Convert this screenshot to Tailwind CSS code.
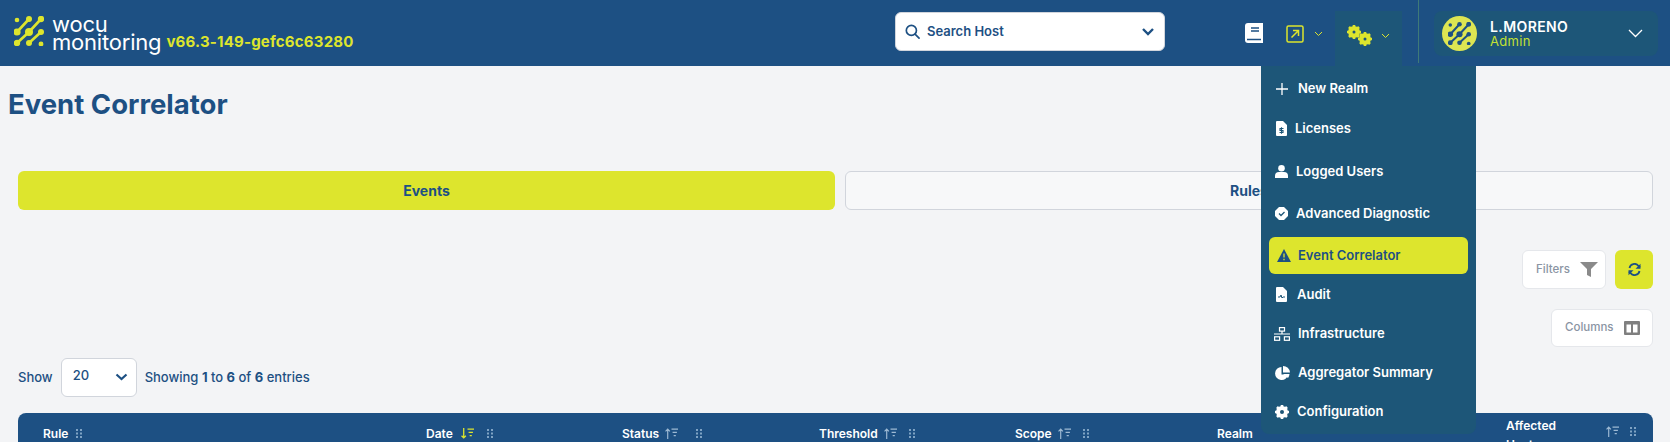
<!DOCTYPE html>
<html lang="en">
<head>
  <meta charset="UTF-8" />
  <title>Event Correlator</title>
  <script src="https://cdn.jsdelivr.net/npm/@tailwindcss/browser@4"></script>
</head>
<body class="relative h-[442px] overflow-hidden bg-[#f3f4f6] font-['Inter',sans-serif] text-[#1d5083]">
  <!-- Header -->
  <header class="flex h-[66px] items-center bg-[#1d5083]">
    <div class="flex w-[895px] items-center pl-[14px]">
      <svg class="-mt-[4px] h-[30px] w-[30px] shrink-0" viewBox="6 6 30 30" fill="#dde52d" stroke="#dde52d">
        <g stroke-width="2.600" stroke-linecap="round" fill="none"><path d="M21 9L9 22"/><path d="M33 9L21 22L9 33"/><path d="M33 22L21 33"/></g>
        <g stroke="none"><circle cx="9" cy="10" r="2.300"/><circle cx="21" cy="9" r="3"/><circle cx="33" cy="9" r="3.200"/><circle cx="9" cy="22" r="3.600"/><circle cx="21" cy="22" r="4"/><circle cx="33" cy="22" r="3"/><circle cx="9" cy="33" r="3.200"/><circle cx="21" cy="33" r="3"/><circle cx="33" cy="34" r="2.400"/></g>
      </svg>
      <div class="ml-[8px] text-[22px] leading-[18px] tracking-[-0.2px] text-white">wocu<br>monitoring</div>
      <span class="ml-[5px] mt-[18px] text-[15px] font-bold tracking-[0.2px] text-[#dde52d]">v66.3-149-gefc6c63280</span>
    </div>
    <div class="-mt-[3px] flex h-[39px] w-[270px] items-center justify-between rounded-md border border-gray-300 bg-white px-[9px]">
      <div class="flex items-center gap-[7px]">
        <svg class="h-[15px] w-[15px]" viewBox="0 0 16 16" fill="none" stroke="#1d5083" stroke-width="1.800"><circle cx="6.800" cy="6.800" r="5.400"/><path d="M11 11l4 4" stroke-linecap="round"/></svg>
        <span class="text-[13px] font-semibold">Search Host</span>
      </div>
      <svg class="h-[10px] w-[14px]" viewBox="0 0 14 10" fill="none" stroke="#1d5083" stroke-width="2.400"><path d="M2 2l5 5 5-5"/></svg>
    </div>
    <!-- book -->
    <svg class="ml-[80px] h-[20px] w-[18px]" viewBox="0 0 18 20"><path fill="#fff" d="M3 0h15v20H3a3 3 0 0 1-3-3V3a3 3 0 0 1 3-3z"/><path stroke="#1d5083" stroke-width="1.400" d="M6 5h8M6 8h8M2 16.500h14"/></svg>
    <!-- external link -->
    <svg class="ml-[23px] mt-[2px] h-[18px] w-[18px]" viewBox="0 0 18 18" fill="none" stroke="#dde52d" stroke-width="1.500"><rect x="1" y="1" width="16" height="16" rx="1.500"/><path d="M5.500 12.500L12.500 5.500M7 5.500h5.500v5.500"/></svg>
    <svg class="ml-[10px] mt-[2px] h-[6px] w-[9px]" viewBox="0 0 9 6" fill="none" stroke="#dde52d" stroke-width="1"><path d="M1 1l3.500 3.500L8 1"/></svg>
    <!-- gears -->
    <div class="ml-[12px] mt-[14px] flex h-[59px] w-[67px] items-start bg-[#1d5678] pl-[11px] pt-[14px]">
      <svg class="h-[21px] w-[26px]" viewBox="0 0 26 21" fill="#dde52d">
        <circle cx="8" cy="7" r="4.500" fill="none" stroke="#dde52d" stroke-width="3"/><path stroke="#dde52d" stroke-width="2.600" d="M8 0v14M1 7h14M3 2l10 10M13 2L3 12"/><circle cx="8" cy="7" r="1.500" fill="#1d5678"/>
        <circle cx="19" cy="14" r="4.500" fill="none" stroke="#dde52d" stroke-width="3"/><path stroke="#dde52d" stroke-width="2.600" d="M19 7v14M12 14h14M14 9l10 10M24 9L14 19"/><circle cx="19" cy="14" r="1.500" fill="#1d5678"/>
      </svg>
      <svg class="ml-[9px] mt-[8px] h-[6px] w-[9px]" viewBox="0 0 9 6" fill="none" stroke="#dde52d" stroke-width="1"><path d="M1 1l3.500 3.500L8 1"/></svg>
    </div>
    <div class="ml-[16px] h-[63px] w-px self-start bg-[#3f7a78]"></div>
    <!-- user -->
    <div class="ml-[15px] flex h-[45px] w-[224px] items-center rounded-lg bg-[#1d5678] pl-[8px] pr-[15px]">
      <div class="flex h-[35px] w-[35px] items-center justify-center rounded-full bg-[#dde552]">
        <svg class="h-[23px] w-[23px]" viewBox="6 6 30 30" fill="#1d5083" stroke="#1d5083">
          <g stroke-width="2.600" stroke-linecap="round" fill="none"><path d="M21 9L9 22"/><path d="M33 9L21 22L9 33"/><path d="M33 22L21 33"/></g>
          <g stroke="none"><circle cx="9" cy="10" r="2.300"/><circle cx="21" cy="9" r="3"/><circle cx="33" cy="9" r="3.200"/><circle cx="9" cy="22" r="3.600"/><circle cx="21" cy="22" r="4"/><circle cx="33" cy="22" r="3"/><circle cx="9" cy="33" r="3.200"/><circle cx="21" cy="33" r="3"/><circle cx="33" cy="34" r="2.400"/></g>
        </svg>
      </div>
      <div class="ml-[13px] flex-1">
        <div class="text-[14px] font-semibold leading-[15px] tracking-[0.4px] text-white">L.MORENO</div>
        <div class="text-[13px] leading-[14px] tracking-[0.3px] text-[#c3e033]">Admin</div>
      </div>
      <svg class="h-[9px] w-[15px]" viewBox="0 0 15 9" fill="none" stroke="#fff" stroke-width="1.300"><path d="M1 1l6.500 6.500L14 1"/></svg>
    </div>
  </header>

  <!-- Settings dropdown -->
  <div class="absolute left-[1261px] top-[66px] h-[368px] w-[215px] rounded-b-lg bg-[#1d5678] text-[13px] font-semibold text-white">
    <div class="absolute left-[15px] top-[13px] flex items-center gap-[10px]">
      <svg class="h-[12px] w-[12px]" viewBox="0 0 12 12" stroke="#fff" stroke-width="1.300"><path d="M6 0v12M0 6h12"/></svg><span>New Realm</span>
    </div>
    <div class="absolute left-[15px] top-[53px] flex items-center gap-[8px]">
      <svg class="h-[15px] w-[11px]" viewBox="0 0 11 15"><path fill="#fff" d="M1 0h6l4 4v10a1 1 0 0 1-1 1H1a1 1 0 0 1-1-1V1a1 1 0 0 1 1-1z"/><path stroke="#1d5678" stroke-width="1.100" fill="none" d="M7.500 7.500H4v2h3v2H3.500M5.500 6.300v6.400"/></svg><span>Licenses</span>
    </div>
    <div class="absolute left-[14px] top-[96px] flex items-center gap-[8px]">
      <svg class="h-[13px] w-[13px]" viewBox="0 0 13 13" fill="#fff"><circle cx="6.500" cy="3.300" r="3.300"/><path d="M0 13v-2a4 4 0 0 1 4-4h5a4 4 0 0 1 4 4v2z"/></svg><span>Logged Users</span>
    </div>
    <div class="absolute left-[14px] top-[138px] flex items-center gap-[8px]">
      <svg class="h-[13px] w-[13px]" viewBox="0 0 13 13"><path fill="#fff" d="M4 0h5l4 4v5l-4 4H4L0 9V4z"/><path stroke="#1d5678" stroke-width="1.300" fill="none" d="M4 6.500l2 2 3.500-3.500"/></svg><span>Advanced Diagnostic</span>
    </div>
    <div class="absolute left-[8px] top-[171px] flex h-[37px] w-[199px] items-center gap-[7px] rounded-md bg-[#dde52d] pl-[8px] text-[#1d5083]">
      <svg class="h-[13px] w-[14px]" viewBox="0 0 14 13"><path fill="#1d5083" d="M7 0l7 13H0z"/><path stroke="#dde52d" stroke-width="1.300" d="M7 4.500v4M7 9.800v1.400"/></svg><span>Event Correlator</span>
    </div>
    <div class="absolute left-[15px] top-[219px] flex items-center gap-[10px]">
      <svg class="h-[15px] w-[11px]" viewBox="0 0 11 15"><path fill="#fff" d="M1 0h6l4 4v10a1 1 0 0 1-1 1H1a1 1 0 0 1-1-1V1a1 1 0 0 1 1-1z"/><path stroke="#1d5678" stroke-width="1" fill="none" d="M2 10h2l1-2 1 3 1-1h2"/></svg><span>Audit</span>
    </div>
    <div class="absolute left-[13px] top-[258px] flex items-center gap-[8px]">
      <svg class="h-[14px] w-[16px]" viewBox="0 0 16 14" fill="none" stroke="#fff" stroke-width="1.200"><rect x="5.500" y=".6" width="5" height="3.500"/><rect x=".6" y="9.800" width="5" height="3.500"/><rect x="10.400" y="9.800" width="5" height="3.500"/><path d="M0 7h16M8 4v3"/></svg><span>Infrastructure</span>
    </div>
    <div class="absolute left-[14px] top-[297px] flex items-center gap-[8px]">
      <svg class="h-[14px] w-[15px]" viewBox="0 0 15 14" fill="#fff"><path d="M6.500 1A6.500 6.500 0 1 0 13 8.500H6.500z"/><path d="M8 0a7 7 0 0 1 7 6.500H8z"/><path d="M8 8h6.500a7 7 0 0 1-1.500 4z"/></svg><span>Aggregator Summary</span>
    </div>
    <div class="absolute left-[14px] top-[336px] flex items-center gap-[8px]">
      <svg class="h-[14px] w-[14px]" viewBox="0 0 14 14"><circle cx="7" cy="7" r="4.500" fill="none" stroke="#fff" stroke-width="3"/><path stroke="#fff" stroke-width="2.600" d="M7 0v14M0 7h14M2 2l10 10M12 2L2 12"/><circle cx="7" cy="7" r="2" fill="#1d5678"/></svg><span>Configuration</span>
    </div>
  </div>

  <main class="pl-[18px] pr-[17px]">
    <h1 class="-ml-[10px] mt-[21px] h-[34px] text-[27.5px] font-bold leading-[34px]">Event Correlator</h1>

    <!-- Tabs -->
    <div class="mt-[50px] flex gap-[10px]">
      <div class="flex h-[39px] w-[817px] items-center justify-center rounded-md bg-[#dde52d] text-[14px] font-bold">Events</div>
      <div class="flex h-[39px] w-[808px] items-center justify-center rounded-md border border-gray-300 bg-[#f7f8f9] text-[14px] font-bold">Rules</div>
    </div>

    <!-- Toolbar -->
    <div class="mt-[40px] flex justify-end gap-[9px]">
      <div class="flex h-[39px] w-[84px] items-center justify-between rounded-md border border-gray-200 bg-white pl-[13px] pr-[7px] text-[11.5px] font-medium text-[#8a94a3]">
        Filters
        <svg class="h-[15px] w-[18px]" viewBox="0 0 18 15" fill="#8a8a8a"><path d="M0 0h18l-7 7v8l-4-2V7z"/></svg>
      </div>
      <div class="flex h-[39px] w-[38px] items-center justify-center rounded-md bg-[#dde52d]">
        <svg class="h-[13px] w-[13px]" viewBox="0 0 13 13" fill="none" stroke="#1d5083" stroke-width="1.800"><path d="M1.500 5A5 5 0 0 1 10.500 3L12 4.500M11.500 8A5 5 0 0 1 2.500 10L1 8.500"/><path fill="#1d5083" stroke="none" d="M12.500 .8v5h-5zM.5 12.200v-5h5z"/></svg>
      </div>
    </div>
    <div class="mt-[20px] flex justify-end">
      <div class="flex h-[38px] w-[102px] items-center justify-between rounded-md border border-gray-200 bg-white pl-[13px] pr-[12px] text-[11.5px] font-medium text-[#8a94a3]">
        Columns
        <svg class="h-[14px] w-[16px]" viewBox="0 0 16 14"><path fill="#7f7f7f" d="M1 0h14a1 1 0 0 1 1 1v12a1 1 0 0 1-1 1H1a1 1 0 0 1-1-1V1a1 1 0 0 1 1-1z"/><path fill="#fff" d="M2.500 3.500h4.500v8H2.500zM9 3.500h4.500v8H9z"/></svg>
      </div>
    </div>

    <!-- Length -->
    <div class="mt-[11px] flex items-center text-[13px] font-medium">
      <span>Show</span>
      <div class="ml-[8px] flex h-[39px] w-[76px] items-start justify-between rounded-md border border-gray-300 bg-white pl-[11px] pr-[8px] pt-[7px] text-[13px]">
        20
        <svg class="mt-[7px] h-[8px] w-[13px]" viewBox="0 0 13 8" fill="none" stroke="#1d5083" stroke-width="2.200"><path d="M1.500 1.500l5 4.500 5-4.500"/></svg>
      </div>
      <span class="ml-[8px]">Showing <b>1</b> to <b>6</b> of <b>6</b> entries</span>
    </div>

    <!-- Table header -->
    <div class="mt-[16px] flex h-[60px] w-[1635px] rounded-t-lg bg-[#1d5083] text-[12px] font-semibold text-white">
      <div class="flex w-[408px] items-start gap-[8px] pl-[25px] pt-[12px]">Rule
        <svg class="mt-[4px] h-[9px] w-[6px]" viewBox="0 0 6 9" fill="#7fa3c4"><path d="M0 0h2v2H0zM4 0h2v2H4zM0 3.500h2v2H0zM4 3.500h2v2H4zM0 7h2v2H0zM4 7h2v2H4z"/></svg></div>
      <div class="flex w-[196px] items-start gap-[8px] pt-[12px]">Date
        <svg class="mt-[3px] h-[11px] w-[13px]" viewBox="0 0 12 10" fill="none" stroke="#dde52d" stroke-width="1.200"><path d="M2.500 0v9M.5 7l2 2 2-2M6 1h6M7 4h4M8 7h2"/></svg>
        <svg class="ml-[5px] mt-[4px] h-[9px] w-[6px]" viewBox="0 0 6 9" fill="#7fa3c4"><path d="M0 0h2v2H0zM4 0h2v2H4zM0 3.500h2v2H0zM4 3.500h2v2H4zM0 7h2v2H0zM4 7h2v2H4z"/></svg></div>
      <div class="flex w-[197px] items-start gap-[6px] pt-[12px]">Status
        <svg class="mt-[3px] h-[11px] w-[13px]" viewBox="0 0 12 10" fill="none" stroke="#9db9d3" stroke-width="1.100"><path d="M2.500 10V1M.5 3l2-2 2 2M6 1h6M7 4h4M8 7h2"/></svg>
        <svg class="ml-[12px] mt-[4px] h-[9px] w-[6px]" viewBox="0 0 6 9" fill="#7fa3c4"><path d="M0 0h2v2H0zM4 0h2v2H4zM0 3.500h2v2H0zM4 3.500h2v2H4zM0 7h2v2H0zM4 7h2v2H4z"/></svg></div>
      <div class="flex w-[196px] items-start gap-[6px] pt-[12px]">Threshold
        <svg class="mt-[3px] h-[11px] w-[13px]" viewBox="0 0 12 10" fill="none" stroke="#9db9d3" stroke-width="1.100"><path d="M2.500 10V1M.5 3l2-2 2 2M6 1h6M7 4h4M8 7h2"/></svg>
        <svg class="ml-[6px] mt-[4px] h-[9px] w-[6px]" viewBox="0 0 6 9" fill="#7fa3c4"><path d="M0 0h2v2H0zM4 0h2v2H4zM0 3.500h2v2H0zM4 3.500h2v2H4zM0 7h2v2H0zM4 7h2v2H4z"/></svg></div>
      <div class="flex w-[202px] items-start gap-[6px] pt-[12px]">Scope
        <svg class="mt-[3px] h-[11px] w-[13px]" viewBox="0 0 12 10" fill="none" stroke="#9db9d3" stroke-width="1.100"><path d="M2.500 10V1M.5 3l2-2 2 2M6 1h6M7 4h4M8 7h2"/></svg>
        <svg class="ml-[6px] mt-[4px] h-[9px] w-[6px]" viewBox="0 0 6 9" fill="#7fa3c4"><path d="M0 0h2v2H0zM4 0h2v2H4zM0 3.500h2v2H0zM4 3.500h2v2H4zM0 7h2v2H0zM4 7h2v2H4z"/></svg></div>
      <div class="w-[289px] pt-[12px]">Realm</div>
      <div class="flex flex-1 items-start justify-between pr-[17px] pt-[3px]">
        <span class="w-[70px] leading-[19px]">Affected Hosts</span>
        <span class="mt-[9px] flex items-start gap-[11px]">
          <svg class="mt-[1px] h-[11px] w-[13px]" viewBox="0 0 12 10" fill="none" stroke="#9db9d3" stroke-width="1.100"><path d="M2.500 10V1M.5 3l2-2 2 2M6 1h6M7 4h4M8 7h2"/></svg>
          <svg class="mt-[2px] h-[9px] w-[6px]" viewBox="0 0 6 9" fill="#7fa3c4"><path d="M0 0h2v2H0zM4 0h2v2H4zM0 3.500h2v2H0zM4 3.500h2v2H4zM0 7h2v2H0zM4 7h2v2H4z"/></svg>
        </span>
      </div>
    </div>
  </main>
</body>
</html>
